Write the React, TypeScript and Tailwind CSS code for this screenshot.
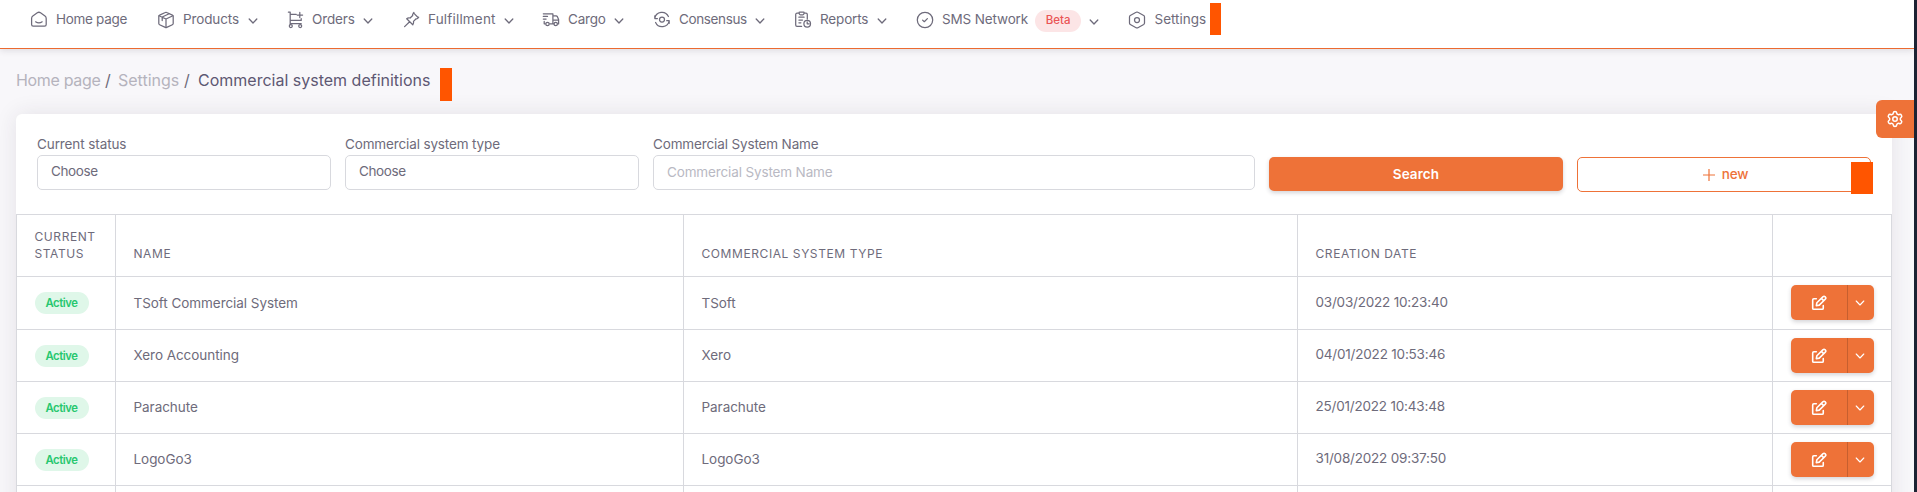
import type { ReactNode } from "react";
import { Settings as Gear } from "lucide-react";

function Svg({ children, className = "size-[18px]", w = 1.25 }: { children: ReactNode; className?: string; w?: number }) {
  return (
    <svg viewBox="0 0 18 18" fill="none" stroke="currentColor" strokeWidth={w} strokeLinecap="round" strokeLinejoin="round" className={"shrink-0 " + className}>
      {children}
    </svg>
  );
}

const HomeIcon = () => (
  <Svg>
    <path d="M1.6 7.4C1.6 6.4 2 5.6 2.8 5L7.3 1.8c1-.7 2.2-.7 3.2 0L15 5c.8.6 1.2 1.4 1.2 2.4v6.2a1.6 1.6 0 0 1-1.6 1.6H3.2a1.6 1.6 0 0 1-1.6-1.6Z" />
    <path d="M5.6 10.8c2 1.3 4.6 1.3 6.6 0" />
  </Svg>
);
const BoxIcon = () => (
  <Svg>
    <path d="M8.3 1.5a1.6 1.6 0 0 1 1.4 0l5.7 2.6a1.4 1.4 0 0 1 .8 1.2v7.2c0 .5-.3 1-.8 1.2l-5.7 2.7a1.6 1.6 0 0 1-1.4 0l-5.7-2.7a1.4 1.4 0 0 1-.8-1.2V5.3c0-.5.3-1 .8-1.2Z" />
    <path d="M2.1 4.8 9 8l6.9-3.2M9 8v8.4M5.2 6.2v3.4M5.2 6l6.9-3.3" />
  </Svg>
);
const OrdersIcon = () => (
  <Svg>
    <path d="M1.4 1.2h1.8v12.2M3.2 3.4h6M3.2 9.4h11V7.6M3.2 12.7h11M12.8 1.4v5.2M10.2 4h5.4" />
    <circle cx="3.8" cy="15" r="1.5" />
    <circle cx="13.2" cy="15" r="1.5" />
  </Svg>
);
const PinIcon = () => (
  <Svg>
    <path d="m10.5 1.9 4.8 4.8-1 .9c-.3.3-.8.3-1.2.2l-2.6 2.6c.3 1.3.1 2.5-.7 3.4L3.7 7.700c.9-.8 2.100-1 3.400-.7l2.600-2.500c-.2-.6-.1-1.200.3-1.600ZM6.600 10.800l-5 4.800M15.300 6.700l.4-.5M10.500 1.900l.4-.4" />
  </Svg>
);
const TruckIcon = () => (
  <Svg>
    <path d="M1.3 2.800h9.600v10H7.800M1.300 5.400h4.200M1.300 8h2.800M2.200 10.400v2.400h1M10.900 4.900h3.300c.5 0 .9.3 1.100.7l1.300 3v4.300h-.8M10.900 9h5.700M10.900 12.800h1.100" />
    <circle cx="5.5" cy="13" r="1.7" />
    <circle cx="13.7" cy="13" r="1.7" />
  </Svg>
);
const ConsensusIcon = () => (
  <Svg>
    <circle cx="9" cy="8.5" r="2.5" />
    <path d="M1.800 7.300a7.200 7.200 0 0 1 13.600-1.800M16.200 9.900a7.200 7.200 0 0 1-13.600 1.600M1.800 4.800v2.700h2.600M16.200 12.300V9.700h-2.500M9 15.600h0" />
  </Svg>
);
const ReportsIcon = () => (
  <Svg>
    <path d="M4.800 2.200H3a1.300 1.300 0 0 0-1.300 1.300v10.600c0 .7.600 1.300 1.300 1.300h4.600M10 2.200h2c.7 0 1.300.6 1.300 1.300v4.600M4.900 6.200h5.200M4.900 9h3.600M4.900 11.800h2M5 1.900c0-.5.3-.8.800-.8h3.600c.5 0 .8.300.8.800l-.5 1.300c-.1.400-.4.600-.8.600H6.300c-.4 0-.7-.2-.8-.6Z" />
    <circle cx="13.2" cy="12.7" r="3.3" />
    <path d="M13.2 10.800v2h2" />
  </Svg>
);
const CheckIcon = () => (
  <Svg>
    <circle cx="9" cy="9" r="7.7" />
    <path d="m6.600 9.100 1.700 1.600 3.100-3.100" />
  </Svg>
);
const HexIcon = () => (
  <Svg>
    <path d="M8.100 1.300a1.700 1.700 0 0 1 1.800 0l5.800 3.200c.5.300.8.800.8 1.400v6.200c0 .6-.3 1.100-.8 1.400l-5.800 3.200a1.700 1.700 0 0 1-1.800 0l-5.800-3.200a1.600 1.600 0 0 1-.8-1.400V5.900c0-.6.3-1.100.8-1.400Z" />
    <circle cx="9" cy="9" r="2.5" />
  </Svg>
);
const Chevron = ({ className = "", w = 1.3 }: { className?: string; w?: number }) => (
  <svg viewBox="0 0 10 8" fill="none" stroke="currentColor" strokeWidth={w} strokeLinecap="round" strokeLinejoin="round" className={"h-2 w-[10px] shrink-0 " + className}>
    <path d="m1.200 2 3.800 4 3.800-4" />
  </svg>
);
const EditIcon = () => (
  <Svg className="size-4" w={1.8}>
    <path d="M6 4.200H3.200A1.300 1.300 0 0 0 1.900 5.500v9.300c0 .7.600 1.300 1.300 1.300h9.300c.7 0 1.300-.6 1.300-1.300V12" />
    <path d="m6 12 .6-3.300 6.700-6.600a1.900 1.900 0 0 1 2.700 2.700L9.300 11.400ZM11.700 3.800l2.600 2.600" />
  </Svg>
);

type Item = { label: string; Icon: () => ReactNode; w: string; slot: string; track: string; arrow?: boolean; beta?: boolean };
const nav: Item[] = [
  { label: "Home page", Icon: HomeIcon, w: "w-[127px]", slot: "w-[26px]", track: "tracking-[-0.31px]" },
  { label: "Products", Icon: BoxIcon, w: "w-[130px]", slot: "w-[26px]", track: "tracking-[-0.12px]", arrow: true },
  { label: "Orders", Icon: OrdersIcon, w: "w-[116px]", slot: "w-[25px]", track: "tracking-[-0.14px]", arrow: true },
  { label: "Fulfillment", Icon: PinIcon, w: "w-[139px]", slot: "w-[25px]", track: "tracking-[0.18px]", arrow: true },
  { label: "Cargo", Icon: TruckIcon, w: "w-[111px]", slot: "w-[26px]", track: "tracking-[-0.2px]", arrow: true },
  { label: "Consensus", Icon: ConsensusIcon, w: "w-[141px]", slot: "w-[26px]", track: "tracking-[-0.37px]", arrow: true },
  { label: "Reports", Icon: ReportsIcon, w: "w-[122px]", slot: "w-[26px]", track: "tracking-[-0.16px]", arrow: true },
  { label: "SMS Network", Icon: CheckIcon, w: "w-[212px]", slot: "w-[26px]", track: "tracking-[-0.14px]", arrow: true, beta: true },
  { label: "Settings", Icon: HexIcon, w: "w-[82px]", slot: "w-[26.5px]", track: "tracking-normal" },
];

const rows = [
  ["TSoft Commercial System", "TSoft", "03/03/2022 10:23:40"],
  ["Xero Accounting", "Xero", "04/01/2022 10:53:46"],
  ["Parachute", "Parachute", "25/01/2022 10:43:48"],
  ["LogoGo3", "LogoGo3", "31/08/2022 09:37:50"],
];

const cols = "grid grid-cols-[99px_568px_614px_475px_119px]";
const cell = "border-r border-[#d8d9de] pl-[17.5px] flex";

export default function App() {
  return (
    <div className="flex h-[492px] w-full overflow-hidden bg-[#f8f7fa] font-['Inter',sans-serif] text-[13.5px] text-[#6e6b7b]">
      <div className="relative min-w-0 flex-1 overflow-hidden bg-[#f8f7fa]">
        <nav className="relative flex h-[49px] border-b border-[#ec6a30] bg-white pl-[30px] shadow-[0_2px_6px_rgba(47,43,61,0.12)]">
          {nav.map(({ label, Icon, w, slot, track, arrow, beta }) => (
            <div key={label} className={`flex h-[39px] shrink-0 items-center whitespace-nowrap ${w}`}>
              <span className={`shrink-0 ${slot}`}><Icon /></span>
              <span className={track}>{label}</span>
              {beta && <span className="ml-[7px] mt-[3px] flex h-[22px] w-[46px] items-center justify-center rounded-full bg-[#fce5e6] text-[11.5px] font-medium text-[#ea5455]">Beta</span>}
              {arrow && <Chevron className={beta ? "ml-2 mt-1" : "ml-[8.5px] mt-0.5"} />}
            </div>
          ))}
          <div className="mt-[3px] h-8 w-[11px] bg-[#ff5500]" />
        </nav>

        <div className="flex h-[65px] items-start whitespace-pre pl-4 pt-[19px] text-base leading-6">
          <span className="w-[89px] tracking-[-0.32px] text-[#b5b3bd]">Home page</span>
          <span className="w-[13px]">/</span>
          <span className="w-[66px] text-[#b5b3bd]">Settings</span>
          <span className="w-[14px]">/</span>
          <span className="w-[242px] text-[#5e5873]">Commercial system definitions</span>
          <span className="h-[33px] w-3 bg-[#ff5500]" />
        </div>

        <main className="ml-4 h-[500px] w-[1876px] rounded-t-md bg-white shadow-[0_0_22px_rgba(47,43,61,0.1)]">
          <div className="flex h-[100px] gap-[14px] pl-[21px] pt-[20px]">
            <label className="w-[294px]">
              <span className="block h-[21px] leading-[20px] tracking-[-0.1px]">Current status</span>
              <span className="flex h-[35px] items-center rounded-[5px] border border-[#d8d9de] pb-[2px] pl-[13px] tracking-[-0.4px]">Choose</span>
            </label>
            <label className="w-[294px]">
              <span className="block h-[21px] leading-[20px] tracking-[-0.14px]">Commercial system type</span>
              <span className="flex h-[35px] items-center rounded-[5px] border border-[#d8d9de] pb-[2px] pl-[13px] tracking-[-0.4px]">Choose</span>
            </label>
            <label className="w-[602px]">
              <span className="block h-[21px] leading-[20px] tracking-[-0.14px]">Commercial System Name</span>
              <input className="block h-[35px] w-full rounded-[5px] border border-[#d8d9de] pb-[2px] pl-[13px] tracking-[-0.14px] placeholder:text-[#b9b9c3]" placeholder="Commercial System Name" />
            </label>
            <button className="mt-[23px] h-[34px] w-[294px] rounded-[5px] bg-[#ee7238] font-semibold tracking-[0.1px] text-white shadow-[0_2px_4px_rgba(47,43,61,0.2)]">Search</button>
            <div className="relative mt-[23px] h-[35px] w-[294px]">
              <button className="flex h-full w-full items-center justify-center gap-[6px] rounded-[5px] border border-[#ee7238] pl-[2px] font-medium tracking-[-0.2px] text-[#ee7238]">
                <svg viewBox="0 0 14 14" className="size-[14px]" stroke="currentColor" strokeWidth="1.2" fill="none"><path d="M7 1v12M1 7h12" /></svg>
                new
              </button>
              <div className="absolute left-[274px] top-[5px] h-8 w-[22px] bg-[#ff5500]" />
            </div>
          </div>

          <section className="border-l border-t border-[#d8d9de]">
            <div className={`${cols} h-[62px] border-b border-[#d8d9de] text-[12px] leading-[17px] tracking-[0.58px]`}>
              {["CURRENT STATUS", "NAME", "COMMERCIAL SYSTEM TYPE", "CREATION DATE", ""].map((h, i) => (
                <div key={i} className={`${cell} items-end pb-[14px] pr-3`}>{h}</div>
              ))}
            </div>
            {rows.map((r, i) => (
              <div key={r[0]} className={`${cols} border-b border-[#d8d9de] ${i === 0 ? "h-[53px]" : "h-[52px]"}`}>
                <div className={`${cell} items-start pt-[15px]`}>
                  <span className="flex h-[22px] w-[54px] items-center justify-center rounded-full bg-[#dff7e9] text-[11.3px] font-semibold tracking-[-0.45px] text-[#28c76f]">Active</span>
                </div>
                <div className={`${cell} items-center tracking-[-0.05px]`}>{r[0]}</div>
                <div className={`${cell} items-center tracking-[-0.05px]`}>{r[1]}</div>
                <div className={`${cell} items-center pb-[2px] tracking-[-0.2px]`}>{r[2]}</div>
                <div className="flex items-start border-r border-[#d8d9de] pl-[18px] pt-2">
                  <div className="flex h-[35px] w-[83px] overflow-hidden rounded-[5px] bg-[#ee7238] text-white shadow-[0_2px_4px_rgba(47,43,61,0.2)]">
                    <button className="flex w-[57px] items-center justify-center border-r border-[#c65f2f]"><EditIcon /></button>
                    <button className="flex flex-1 items-center justify-center pr-[2px]"><Chevron w={1.1} /></button>
                  </div>
                </div>
              </div>
            ))}
            <div className={`${cols} h-[52px]`}>
              {[0, 1, 2, 3, 4].map((i) => <div key={i} className={cell} />)}
            </div>
          </section>
        </main>

        <button className="absolute right-0 top-[100px] flex h-[38px] w-[38px] items-center justify-center rounded-l-[6px] bg-[#ee7238] text-white">
          <Gear size={18} strokeWidth={2} />
        </button>
      </div>
      <div className="w-[3px] shrink-0 bg-[#1c2333]" />
    </div>
  );
}
